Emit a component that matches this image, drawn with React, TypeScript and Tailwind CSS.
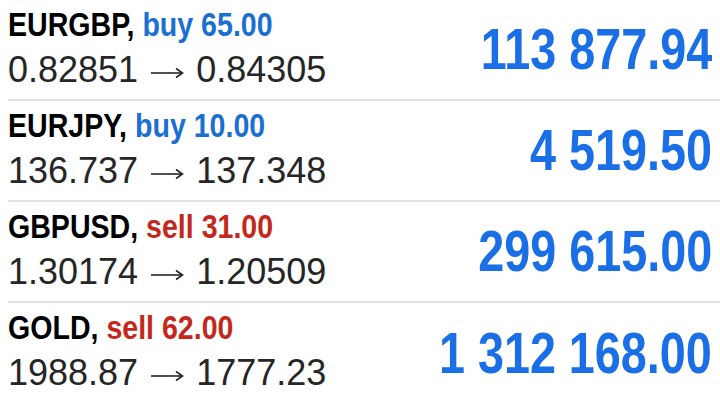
import React from "react";

type Side = "buy" | "sell";

interface Position {
  symbol: string;
  side: Side;
  volume: string;
  open: string;
  close: string;
  profit: string;
}

const positions: Position[] = [
  { symbol: "EURGBP", side: "buy", volume: "65.00", open: "0.82851", close: "0.84305", profit: "113 877.94" },
  { symbol: "EURJPY", side: "buy", volume: "10.00", open: "136.737", close: "137.348", profit: "4 519.50" },
  { symbol: "GBPUSD", side: "sell", volume: "31.00", open: "1.30174", close: "1.20509", profit: "299 615.00" },
  { symbol: "GOLD", side: "sell", volume: "62.00", open: "1988.87", close: "1777.23", profit: "1 312 168.00" },
];

// thin long arrow like the iOS one
function Arrow() {
  return (
    <svg width="34" height="14" viewBox="0 0 34 14" className="inline-block mx-[12px] align-[2px]">
      <path d="M1 7H32" stroke="#262626" strokeWidth="1.6" fill="none" />
      <path d="M26 2.5L32.5 7L26 11.5" stroke="#262626" strokeWidth="1.6" fill="none" strokeLinejoin="miter" />
    </svg>
  );
}

function PositionRow({ p, last }: { p: Position; last: boolean }) {
  return (
    <div
      className={
        "ml-2 h-[101px] flex items-center justify-between pr-[8px] font-['Liberation_Sans',Arial,sans-serif] " +
        (last ? "" : "border-b-2 border-[#e2e2e2]")
      }
    >
      {/* left: symbol + prices */}
      <div className="self-start pt-[6px]">
        <div className="text-[34px] leading-[36px] font-bold text-black whitespace-nowrap origin-left scale-x-[0.84]">
          {p.symbol},{" "}
          <span className={p.side === "buy" ? "text-[#1b6fd2]" : "text-[#c4281d]"}>
            {p.side} {p.volume}
          </span>
        </div>
        <div className="mt-[8px] text-[36px] leading-[40px] text-[#262626] whitespace-nowrap">
          {p.open}
          <Arrow />
          {p.close}
        </div>
      </div>

      {/* right: profit */}
      <div className="text-[57px] leading-none font-bold text-[#1a6ee6] whitespace-nowrap origin-right scale-x-[0.82]">
        {p.profit}
      </div>
    </div>
  );
}

export default function App() {
  return (
    <div className="w-[720px] h-[405px] bg-white overflow-hidden">
      {positions.map((p, i) => (
        <PositionRow key={p.symbol} p={p} last={i === positions.length - 1} />
      ))}
    </div>
  );
}
